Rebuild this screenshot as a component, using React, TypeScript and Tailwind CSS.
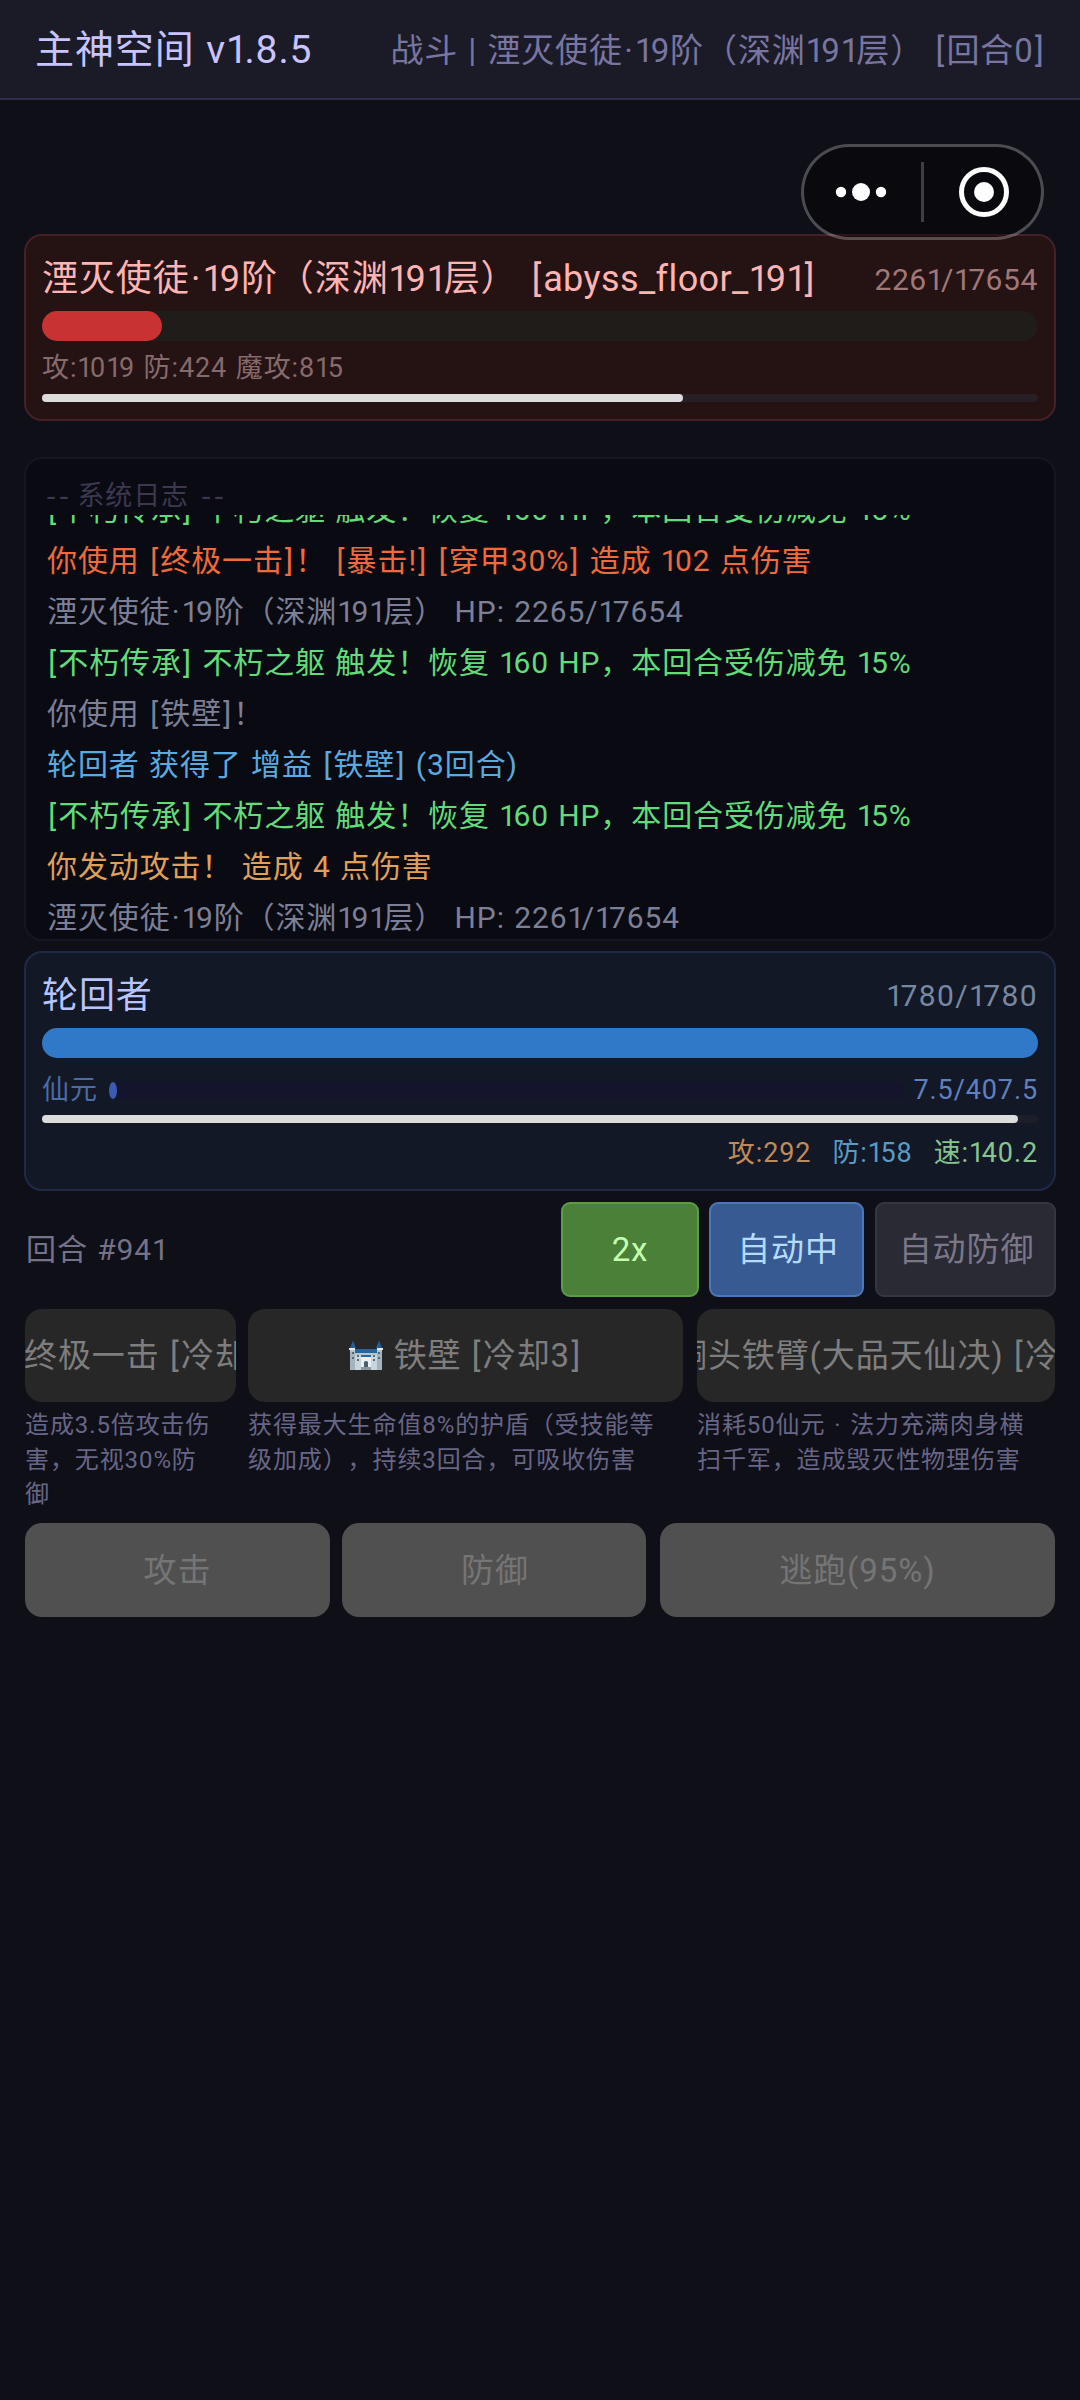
import type { ReactNode } from "react";
import clsx from "clsx";

type LogLine = { text: string; color: string };

const logs: LogLine[] = [
  { text: "[不朽传承] 不朽之躯 触发！恢复 160 HP，本回合受伤减免 15%", color: "text-[#62dc78]" },
  { text: "你使用 [终极一击]！ [暴击!] [穿甲30%] 造成 102 点伤害", color: "text-[#f06a3c]" },
  { text: "湮灭使徒·19阶（深渊191层） HP: 2265/17654", color: "text-[#7c8096]" },
  { text: "[不朽传承] 不朽之躯 触发！恢复 160 HP，本回合受伤减免 15%", color: "text-[#62dc78]" },
  { text: "你使用 [铁壁]！", color: "text-[#7c8096]" },
  { text: "轮回者 获得了 增益 [铁壁] (3回合)", color: "text-[#5aaae0]" },
  { text: "[不朽传承] 不朽之躯 触发！恢复 160 HP，本回合受伤减免 15%", color: "text-[#62dc78]" },
  { text: "你发动攻击！ 造成 4 点伤害", color: "text-[#e0a05a]" },
  { text: "湮灭使徒·19阶（深渊191层） HP: 2261/17654", color: "text-[#7c8096]" },
];

const enemy = { hp: 2261, maxHp: 17654, hpRate: 12.05, gauge: 64.4 };
const player = { hp: 1780, maxHp: 1780, hpRate: 100, gauge: 98 };

// Narrow ones, roomy brackets and middle dots
function Mixed({ text }: { text: string }) {
  return (
    <>
      {text.split(/([[\]·]|1)/).map((part, i) => {
        if (i % 2 === 0) return part;
        return (
          <span key={i} className={part === "1" ? "tracking-[-0.09em]" : "mx-[0.04em]"}>
            {part}
          </span>
        );
      })}
    </>
  );
}

function Bar({ value, track, fill }: { value: number; track: string; fill: string }) {
  return (
    <div className={track}>
      <div className={clsx("h-full", fill)} style={{ width: `${value}%` }} />
    </div>
  );
}

function Castle() {
  return (
    <svg viewBox="0 0 34 31" className="w-[34px] h-[31px] mr-[11px] shrink-0">
      <path d="M1 10h32v20H1z" fill="#b4c3cc" />
      <path d="M6 15h22v15H6z" fill="#c9d5dc" />
      <path d="M12 17h10v13H12z" fill="#e8eef2" />
      <path d="M6 9h22v4H6z" fill="#2a659a" />
      <path d="M12 15h10v2H12z" fill="#2a659a" />
      <path d="M4 0.500 7 8H1zM30 0.500 33 8h-6z" fill="#21609a" />
      <path d="M0 8h6v2H0zM28 8h6v2h-6z" fill="#dfe7ec" />
      <path d="M1 12h5v18H1zM28 12h5v18h-5z" fill="#a3b4be" />
      <path
        d="M3 12h2v2H3zM3 17h2v2H3zM8 15h2v2H8zM8 19h2v2H8zM24 15h2v2h-2zM24 19h2v2h-2zM29 12h2v2h-2zM29 17h2v2h-2z"
        fill="#546b7a"
      />
      <path d="M15 28v-6q2-2 4 0v6z" fill="#4b5e6b" />
      <path d="M12 27h10v3H12z" fill="#8798a3" />
    </svg>
  );
}

function SkillButton({ align = "justify-center", children }: { align?: string; children: ReactNode }) {
  return (
    <button
      className={clsx(
        "h-[93px] w-full rounded-[17px] bg-[#272728] text-[#7e7e7e] text-[33px] flex items-center overflow-hidden whitespace-nowrap",
        align
      )}
    >
      {children}
    </button>
  );
}

function SkillDesc({ lines }: { lines: string[] }) {
  return (
    <p className="mt-1.5 text-2xl leading-[34.5px] text-[#686686] whitespace-nowrap">
      {lines.map((line) => (
        <span key={line} className="block">
          <Mixed text={line} />
        </span>
      ))}
    </p>
  );
}

export default function App() {
  return (
    <main className="w-[1080px] min-h-[2400px] bg-[#0f0f18] tracking-[0.9px] [word-spacing:1px] font-[Roboto,'Noto_Sans_CJK_SC',sans-serif] [text-spacing-trim:space-all]">
      {/* Header */}
      <header className="h-[100px] pt-[3px] pl-[35px] pr-[34px] flex items-center justify-between bg-[#1b1b28] border-b-2 border-[#302d4c] whitespace-nowrap">
        <h1 className="text-[39px] text-[#c8c4ff]">
          <Mixed text="主神空间 v1.8.5" />
        </h1>
        <p className="text-[33px] text-[#7876a0]">
          <Mixed text="战斗 | 湮灭使徒·19阶（深渊191层） [回合0]" />
        </p>
      </header>

      {/* Mini program capsule */}
      <div className="absolute left-[801px] top-36 w-[243px] h-24 rounded-full border-3 border-white/25 bg-black/40 bg-clip-padding">
        <svg viewBox="0 0 237 90" className="w-full h-full" fill="#fff">
          <circle cx="37" cy="45" r="5.2" />
          <circle cx="57" cy="45" r="9" />
          <circle cx="77" cy="45" r="5.2" />
          <path d="M117 15h3v60h-3z" fillOpacity="0.22" />
          <circle cx="180" cy="45" r="22.500" fill="none" stroke="#fff" strokeWidth="5" />
          <circle cx="180" cy="45" r="10" />
        </svg>
      </div>

      {/* Enemy */}
      <section className="mx-6 mt-[134px] h-[187px] px-4 pt-4 rounded-[18px] border-2 border-[#452024] bg-[#251213]">
        <div className="h-[54px] flex items-center justify-between whitespace-nowrap">
          <h2 className="text-[36px] text-[#ffb4b4]">
            <Mixed text="湮灭使徒·19阶（深渊191层） " />
            <span className="tracking-[0.4px] ml-0.5">
              <Mixed text="[abyss_floor_191]" />
            </span>
          </h2>
          <span className="text-[30px] tracking-[0.6px] text-[#a07878]">
            <Mixed text={`${enemy.hp}/${enemy.maxHp}`} />
          </span>
        </div>
        <div className="mt-[5px]">
          <Bar value={enemy.hpRate} track="h-[30px] rounded-[15px] bg-[#201c1a]" fill="rounded-[15px] bg-[#c83232]" />
        </div>
        <p className="h-[53px] leading-[55px] text-[27px] text-[#866a6c]">
          <Mixed text="攻:1019 防:424 魔攻:815" />
        </p>
        <Bar value={enemy.gauge} track="h-2 rounded bg-[#262024]" fill="rounded bg-[#dcdcdc]" />
      </section>

      {/* Battle log */}
      <section className="mx-6 mt-9 h-[484px] px-[21px] rounded-[18px] border-2 border-[#161620] bg-[#0a0a12] flex flex-col">
        <p className="-ml-1 pt-[19px] h-14 leading-[37px] text-[27px] text-[#3c384e]">
          <span className="font-['Liberation_Mono'] tracking-[-3.500px]">--</span>
          <span className="mx-[9px]">系统日志</span>
          <span className="font-['Liberation_Mono'] tracking-[-3.500px]">--</span>
        </p>
        <div className="h-[428px] shrink-0 flex flex-col justify-end overflow-hidden">
          {logs.map((log, i) => (
            <p key={i} className={clsx("h-[51px] leading-[51px] shrink-0 text-[30px] whitespace-nowrap", log.color)}>
              <Mixed text={log.text} />
            </p>
          ))}
        </div>
      </section>

      {/* Player */}
      <section className="mx-6 mt-2.5 h-60 px-4 pt-4 rounded-[18px] border-2 border-[#1e2a46] bg-[#121825]">
        <div className="h-[54px] flex items-center justify-between">
          <h2 className="text-[36px] text-[#b8c4ff]">轮回者</h2>
          <span className="pb-0.5 text-[30px] tracking-[1.4px] text-[#7888a2]">
            <Mixed text={`${player.hp}/${player.maxHp}`} />
          </span>
        </div>
        <div className="mt-[5px]">
          <Bar value={player.hpRate} track="h-[30px] rounded-[15px] bg-[#1a1c20]" fill="rounded-[15px] bg-[#3078c8]" />
        </div>
        <div className="h-[57px] pt-[7px] flex items-center text-[27px]">
          <span className="text-[#4c6ca8]">仙元</span>
          <div className="flex-1 ml-[11px] mr-[9px]">
            <Bar value={1} track="h-[17px] rounded-lg bg-[#14142d]" fill="rounded-[50%] bg-[#3c5ab4]" />
          </div>
          <span className="text-[#6080c0]">7.5/407.5</span>
        </div>
        <Bar value={player.gauge} track="h-2 rounded bg-[#1e1e28]" fill="rounded bg-[#dcdcdc]" />
        <div className="h-[58px] pt-0.5 flex items-center justify-end gap-[21px] text-[27px]">
          <span className="text-[#c08a5a]">
            <Mixed text="攻:292" />
          </span>
          <span className="text-[#5a9ac4]">
            <Mixed text="防:158" />
          </span>
          <span className="text-[#88c490]">
            <Mixed text="速:140.2" />
          </span>
        </div>
      </section>

      {/* Turn controls */}
      <div className="mx-6 mt-[11px] h-[95px] flex items-center text-[33px]">
        <span className="flex-1 pl-0.5 text-[30px] text-[#767288]">
          <Mixed text="回合 #941" />
        </span>
        <button className="w-[138px] h-full rounded-[9px] border-2 border-[#5a9c48] bg-[#4a8038] text-[#c4ffb0]">2x</button>
        <button className="ml-2.5 w-[155px] h-full pl-[3px] rounded-[9px] border-2 border-[#4a78b8] bg-[#385a92] text-[#b4dcff]">
          自动中
        </button>
        <button className="ml-[11px] w-[181px] h-full pl-0.5 rounded-[9px] border-2 border-[#363640] bg-[#2a2a34] text-[#7a7888]">
          自动防御
        </button>
      </div>

      {/* Skills */}
      <div className="mx-[25px] mt-3 h-[214px] flex">
        <div className="w-[211px]">
          <SkillButton align="justify-start">
            <span className="-ml-px">
              <Mixed text="终极一击 [冷却3]" />
            </span>
          </SkillButton>
          <SkillDesc lines={["造成3.5倍攻击伤", "害，无视30%防", "御"]} />
        </div>
        <div className="ml-3 w-[435px]">
          <SkillButton>
            <Castle />
            <span>
              <Mixed text="铁壁 [冷却3]" />
            </span>
          </SkillButton>
          <SkillDesc lines={["获得最大生命值8%的护盾（受技能等", "级加成），持续3回合，可吸收伤害"]} />
        </div>
        <div className="ml-3.5 w-[358px]">
          <SkillButton align="justify-start">
            <span className="-ml-[23px]">
              <Mixed text="铜头铁臂(大品天仙决) [冷却3]" />
            </span>
          </SkillButton>
          <SkillDesc lines={["消耗50仙元 · 法力充满肉身横", "扫千军，造成毁灭性物理伤害"]} />
        </div>
      </div>

      {/* Actions */}
      <div className="mx-[25px] h-[94px] flex text-[33px] text-[#757575]">
        <button className="w-[305px] pt-px rounded-[17px] bg-[#505050]">攻击</button>
        <button className="ml-3 w-[304px] pt-px pl-0.5 rounded-[17px] bg-[#505050]">防御</button>
        <button className="ml-3.5 flex-1 pt-px rounded-[17px] bg-[#505050]">
          <Mixed text="逃跑(95%)" />
        </button>
      </div>
    </main>
  );
}
